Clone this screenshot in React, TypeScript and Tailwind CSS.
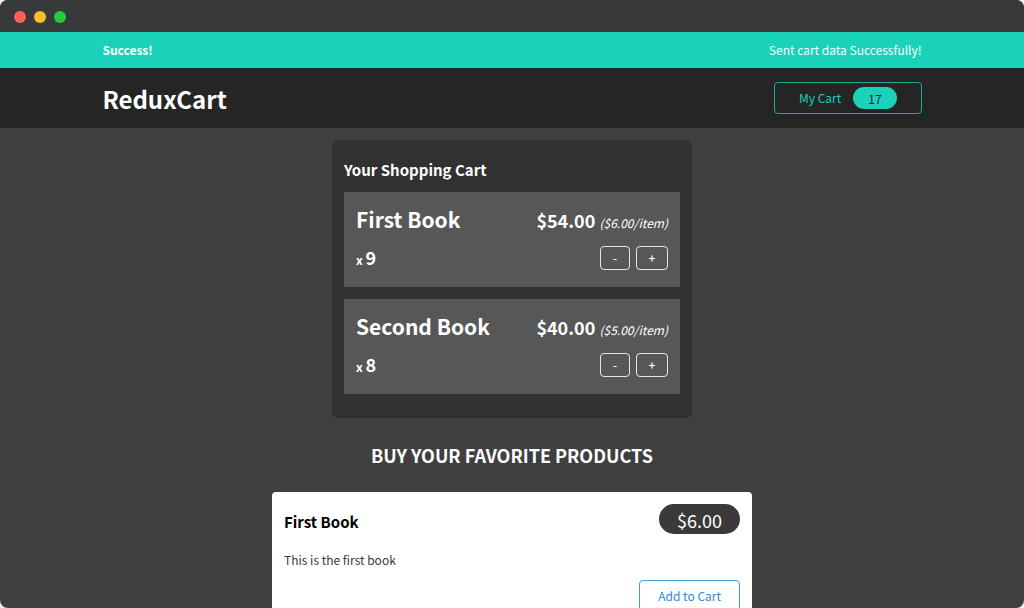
interface CartLine {
  id: string;
  title: string;
  quantity: number;
  price: number;
}

const cartLines: CartLine[] = [
  { id: 'p1', title: 'First Book', quantity: 9, price: 6 },
  { id: 'p2', title: 'Second Book', quantity: 8, price: 5 },
];

const stepButton =
  'h-6 rounded border border-white/85 text-center text-xs leading-none font-medium text-white';

function TitleBar() {
  return (
    <div className="flex h-8 shrink-0 items-center gap-2 bg-[#38393b] px-3.5 pt-0.5">
      <span className="size-3 rounded-full bg-[#ff5f57]" />
      <span className="size-3 rounded-full bg-[#febc2e]" />
      <span className="size-3 rounded-full bg-[#28c840]" />
    </div>
  );
}

function Notification() {
  return (
    <section className="flex h-9 shrink-0 items-center justify-between bg-[#1ad1b9] px-[10%] text-xs text-white">
      <h2 className="font-bold">Success!</h2>
      <p>Sent cart data Successfully!</p>
    </section>
  );
}

function Header({ count }: { count: number }) {
  return (
    <header className="flex h-15 shrink-0 items-center justify-between bg-[#252525] px-[10%]">
      <h1 className="pt-0.5 text-2xl leading-none font-bold text-white">ReduxCart</h1>
      <button className="flex h-8 items-center gap-3 rounded border border-[#1ad1b9]/80 px-6 text-xs text-[#1ad1b9]">
        <span>My Cart</span>
        <span className="flex h-[22px] items-center rounded-full bg-[#1ad1b9] px-[15px] pt-0.5 text-[#252525]">
          {count}
        </span>
      </button>
    </header>
  );
}

function CartItem({ line }: { line: CartLine }) {
  return (
    <li className="mb-3 h-[95px] bg-[#575757] px-3 pt-[11px] text-white">
      <div className="flex items-baseline justify-between leading-8">
        <h3 className="text-[21px] font-bold">{line.title}</h3>
        <div className="text-lg font-bold">
          ${(line.price * line.quantity).toFixed(2)}{' '}
          <span className="text-xs font-normal italic">(${line.price.toFixed(2)}/item)</span>
        </div>
      </div>
      <div className="mt-2 flex items-center justify-between">
        <div className="pt-0.5 text-xs leading-6 font-bold">
          x <span className="text-lg leading-6">{line.quantity}</span>
        </div>
        <div className="flex gap-1.5">
          <button aria-label={`Remove one ${line.title}`} className={`${stepButton} w-[30px]`}>
            -
          </button>
          <button aria-label={`Add one ${line.title}`} className={`${stepButton} w-8`}>
            +
          </button>
        </div>
      </div>
    </li>
  );
}

export default function App() {
  return (
    <div className="h-screen bg-[#f0f0f0] font-['Noto_Sans_CJK_JP','Noto_Sans',sans-serif]">
      <div className="flex h-full flex-col overflow-hidden rounded-lg bg-[#3f3f3f]">
        <TitleBar />
        <Notification />
        <Header count={17} />
        <main className="min-h-0 flex-1 overflow-hidden">
          <section className="mx-auto mt-3 w-full max-w-[360px] rounded-md bg-[#313131] p-3">
            <h2 className="mt-1.5 mb-2.5 text-[15px] leading-6 font-bold text-white">
              Your Shopping Cart
            </h2>
            <ul>
              {cartLines.map((line) => (
                <CartItem key={line.id} line={line} />
              ))}
            </ul>
          </section>
          <section className="mx-auto mt-6 w-full max-w-[480px]">
            <h2 className="text-center text-lg leading-[26px] font-bold text-white uppercase">
              Buy your favorite products
            </h2>
            <article className="mt-6 rounded bg-white p-3">
              <header className="flex items-center justify-between">
                <h3 className="mt-1.5 text-[15px] leading-6 font-bold text-black">First Book</h3>
                <div className="flex h-[30px] items-center rounded-full bg-[#3a3a3a] px-[18px] pt-0.5 text-lg text-white">
                  $6.00
                </div>
              </header>
              <p className="mt-4 text-xs leading-5 text-[#3a3a3a]">This is the first book</p>
              <div className="mt-2.5 flex justify-end">
                <button className="h-8 rounded border border-[#3c9fdb] px-[18px] text-xs text-[#2c8cd0]">
                  Add to Cart
                </button>
              </div>
            </article>
          </section>
        </main>
      </div>
    </div>
  );
}
